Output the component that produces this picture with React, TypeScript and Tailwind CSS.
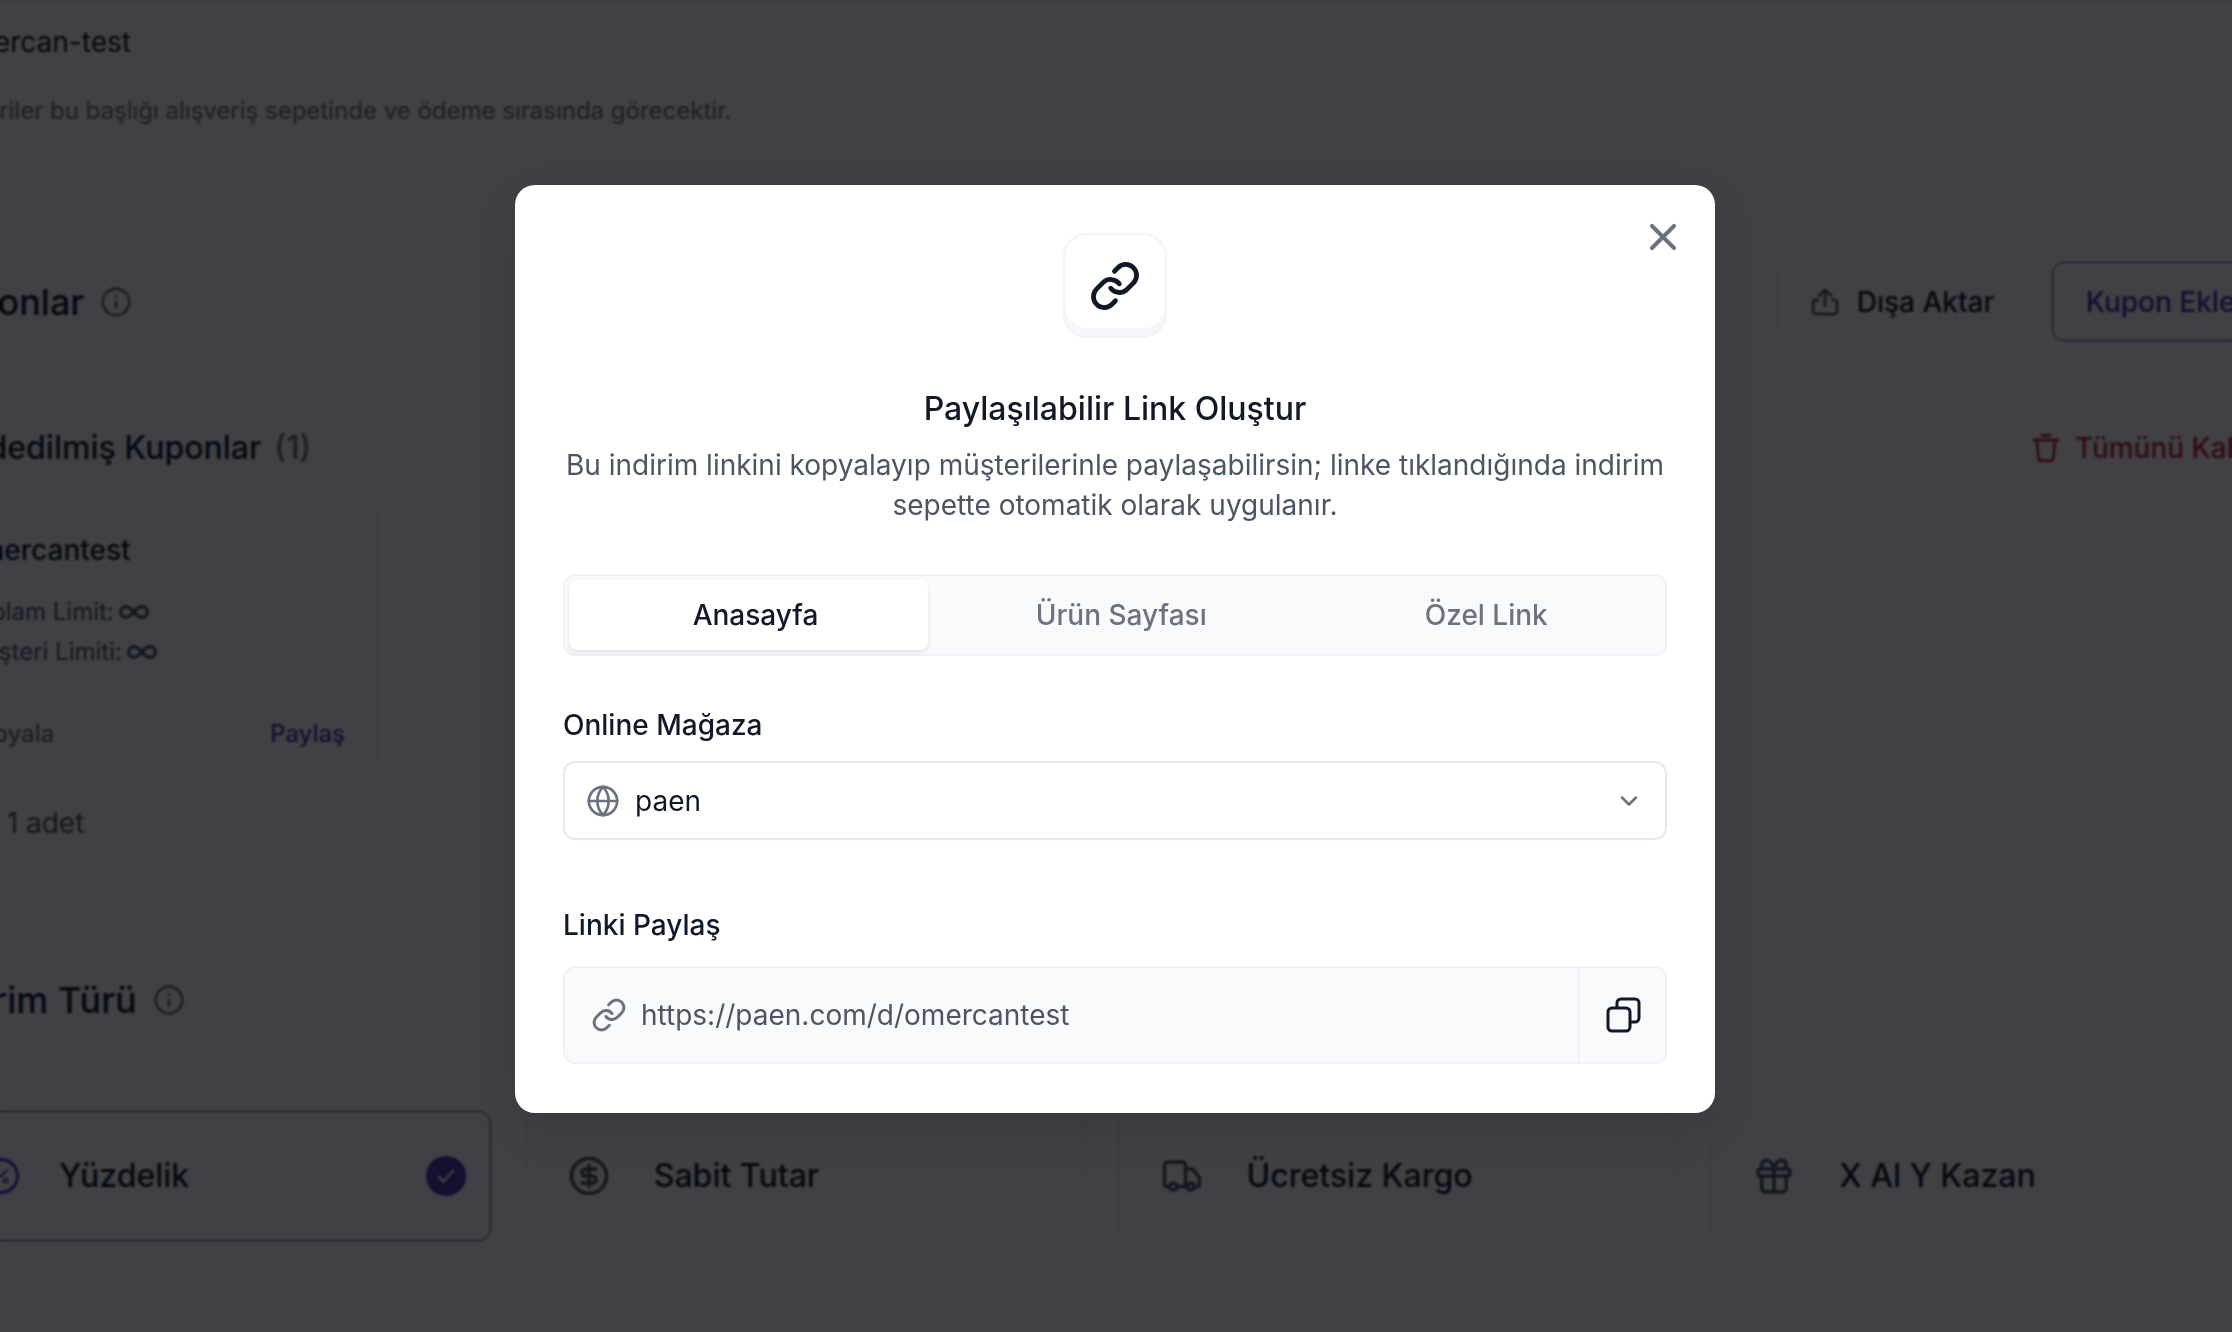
import { ChevronDown, CircleDollarSign, Gift, Globe, Info, Infinity as InfinityIcon, Link, Percent, Truck, X } from "lucide-react";

const INTER = { fontFamily: "Inter, 'Noto Sans', sans-serif" };

const discountTypes = [
  { label: "Sabit Tutar", Icon: CircleDollarSign },
  { label: "Ücretsiz Kargo", Icon: Truck },
  { label: "X Al Y Kazan", Icon: Gift },
];

function UploadIcon() {
  return (
    <svg width="32" height="32" viewBox="0 0 32 32" fill="none" stroke="#4b5563" strokeWidth="2.6" strokeLinecap="round" strokeLinejoin="round">
      <path d="M16 20V4M10 9.5 16 4l6 5.5" />
      <path d="M9 14H6.5A2.5 2.5 0 0 0 4 16.500V25a3 3 0 0 0 3 3h18a3 3 0 0 0 3-3v-8.500A2.500 2.500 0 0 0 25.500 14H23" />
    </svg>
  );
}

function TrashIcon() {
  return (
    <svg width="30" height="30" viewBox="0 0 30 30" fill="none" stroke="#c92a2a" strokeWidth="2.8" strokeLinecap="round" strokeLinejoin="round">
      <path d="M3 7h24M11 2.500h8M6 7l1.500 18a2.500 2.500 0 0 0 2.500 2.500h10a2.500 2.500 0 0 0 2.500-2.500L24 7" />
    </svg>
  );
}

function CopyIcon() {
  return (
    <svg width="36" height="36" viewBox="0 0 36 36" fill="none" stroke="#111827" strokeWidth="3">
      <rect x="3" y="11" width="22" height="23" rx="4" />
      <path d="M12 11V6a4 4 0 0 1 4-4h14a4 4 0 0 1 4 4v15a4 4 0 0 1-4 4h-5" />
    </svg>
  );
}

function Background() {
  return (
    <div className="ml-[-68px] w-[2337px] text-[#111827]">
      {/* name input */}
      <div className="h-[81px] border-y-2 border-[#eef0f2] flex items-center text-[28px] pt-[2px]">
        <span className="ml-[16px]">Ömercan-test</span>
      </div>
      <p className="mt-[14px] h-[32px] text-[24px] leading-[32px] text-[#6b7280] ml-[-3px]">Müşteriler bu başlığı alışveriş sepetinde ve ödeme sırasında görecektir.</p>

      {/* coupons header */}
      <div className="mt-[135px] flex items-center justify-between">
        <div className="flex items-center gap-[16px] ml-[-2px]">
          <h2 className="text-[36px] font-medium">Kuponlar</h2>
          <Info size={32} className="text-[#6b7280]" />
        </div>
        <div className="flex gap-[25px]">
          <button className="h-[79px] w-[251px] rounded-[12px] border-2 border-[#eef0f2] flex items-center justify-center gap-[16px] text-[28px] font-medium">
            <UploadIcon />
            Dışa Aktar
          </button>
          <button className="h-[79px] w-[217px] rounded-[12px] border-[1.5px] border-[#4338a8] text-[28px] font-medium text-[#4338a8]">Kupon Ekle</button>
        </div>
      </div>

      {/* saved coupons */}
      <div className="mt-[83px] flex items-center justify-between">
        <div className="flex items-center gap-[13px] text-[32px] font-medium ml-[-2px]">
          <h3>Kaydedilmiş Kuponlar</h3>
          <span className="text-[#6b7280]">(1)</span>
        </div>
        <div className="flex items-center gap-[14px] text-[28px] font-medium text-[#c92a2a]">
          <TrashIcon />
          Tümünü Kaldır
        </div>
      </div>

      <div className="mt-[31px] w-[446px] h-[270px] rounded-[12px] border-2 border-[#eef0f2] flex flex-col">
        <div className="flex-1 pl-[24px] pt-[27px]">
          <div className="text-[28px] font-medium leading-[36px]">Ömercantest</div>
          <div className="mt-[24px] ml-[5px] flex items-center gap-[4px] text-[24px] leading-[40px] text-[#4b5563]">Toplam Limit: <InfinityIcon size={32} strokeWidth={2.400} /></div>
          <div className="ml-[5px] flex items-center gap-[4px] text-[24px] leading-[40px] text-[#4b5563]">Müşteri Limiti: <InfinityIcon size={32} strokeWidth={2.400} /></div>
        </div>
        <div className="h-[76px] border-t-2 border-dashed border-[#eef0f2] flex items-center justify-between pl-[29px] pr-[31px] text-[24px] font-medium">
          <span className="text-[#6b7280]">Kopyala</span>
          <span className="text-[#4338a8]">Paylaş</span>
        </div>
      </div>
      <div className="mt-[31px] text-[28px] leading-[38px] text-[#4b5563] ml-[-30px]">Toplam 1 adet</div>

      {/* discount type */}
      <div className="mt-[136px] ml-[-2px] flex items-center gap-[16px]">
        <h2 className="text-[36px] font-medium leading-[44px]">İndirim Türü</h2>
        <Info size={32} className="text-[#6b7280]" />
      </div>
      <div className="mt-[89px] grid grid-cols-4 gap-[34px]">
        <div className="relative h-[130px] rounded-[12px] border-[1.5px] border-[#4338a8] flex items-center pl-[32px] gap-[22px]">
          <div className="w-[72px] h-[80px] rounded-full flex items-center justify-center">
            <div className="w-[36px] h-[36px] rounded-full border-[3px] border-[#4338a8] flex items-center justify-center">
              <Percent size={20} className="text-[#4338a8]" />
            </div>
          </div>
          <span className="text-[32px] font-medium">Yüzdelik</span>
          <div className="ml-auto mr-[24px] w-[40px] h-[40px] rounded-full bg-[#4338a8] flex items-center justify-center">
            <svg width="24" height="24" viewBox="0 0 24 24" fill="none" stroke="#fff" strokeWidth="2.6" strokeLinecap="round" strokeLinejoin="round"><path d="M5 13l4.500 4.500L19 7" /></svg>
          </div>
        </div>
        {discountTypes.map(({ label, Icon }) => (
          <div key={label} className="h-[130px] rounded-[12px] border-2 border-[#eef0f2] flex items-center pl-[24px] gap-[27px]">
            <div className="w-[76px] h-[76px] rounded-full border-2 border-[#f3f4f6] flex items-center justify-center text-[#4b5563]">
              <Icon size={42} strokeWidth={2} />
            </div>
            <span className="text-[32px] font-medium">{label}</span>
          </div>
        ))}
      </div>
    </div>
  );
}

export default function App() {
  return (
    <div className="relative h-screen overflow-hidden bg-white" style={INTER}>
      <Background />

      <div className="absolute inset-0 bg-[#04040a]/[0.76] backdrop-blur-[1px] flex justify-center items-start pt-[185px] pr-[2px]">
        <div className="relative w-[1200px] rounded-[20px] bg-white px-[48px] pt-[48px] pb-[49px] shadow-[0_16px_48px_rgba(0,0,0,0.12)]">
          <button className="absolute top-[30px] right-[30px] text-[#6b7280]">
            <X size={44} strokeWidth={2.200} />
          </button>

          <div className="mx-auto w-[104px] h-[105px] rounded-[24px] bg-white border-2 border-[#f1f3f7] shadow-[inset_0_-8px_0_#f5f7fa] flex items-center justify-center">
            <Link size={52} strokeWidth={2.200} className="text-[#111827]" />
          </div>

          <h2 className="mt-[51px] text-center text-[32px] leading-[40px] font-medium text-[#111827]">Paylaşılabilir Link Oluştur</h2>
          <p className="mt-[16px] text-center text-[28px] leading-[40px] text-[#4b5563]">
            Bu indirim linkini kopyalayıp müşterilerinle paylaşabilirsin; linke tıklandığında indirim
            <br />
            sepette otomatik olarak uygulanır.
          </p>

          <div className="mt-[49px] h-[82px] rounded-[12px] bg-[#f9fafc] border-2 border-[#f1f2f7] p-[4px] grid grid-cols-[359px_1fr_1fr] text-[28px] font-medium">
            <div className="rounded-[8px] bg-white shadow-[0_2px_4px_rgba(0,0,0,0.1)] flex items-center justify-center pl-[14px] text-[#111827]">Anasayfa</div>
            <div className="flex items-center justify-center text-[#6b7280] ml-[20px]">Ürün Sayfası</div>
            <div className="flex items-center justify-center text-[#6b7280] ml-[17px]">Özel Link</div>
          </div>

          <label className="block mt-[49px] text-[28px] leading-[40px] font-medium text-[#111827]">Online Mağaza</label>
          <div className="mt-[16px] h-[79px] rounded-[12px] border-2 border-[#e5e8ef] flex items-center pl-[21px] pr-[22px]">
            <Globe size={34} strokeWidth={1.900} className="text-[#6b7280]" />
            <span className="ml-[15px] text-[28px] text-[#111827]">paen</span>
            <ChevronDown size={28} strokeWidth={2.200} className="ml-auto text-[#6b7280]" />
          </div>

          <label className="block mt-[65px] text-[28px] leading-[40px] font-medium text-[#111827]">Linki Paylaş</label>
          <div className="mt-[21px] h-[98px] rounded-[12px] bg-[#f9fafc] border-2 border-[#f1f2f7] flex items-center">
            <Link size={36} strokeWidth={2} className="ml-[26px] text-[#6b7280]" />
            <span className="ml-[14px] text-[28px] text-[#4b5563]">https://paen.com/d/omercantest</span>
            <div className="ml-auto w-[87px] h-full border-l-2 border-[#f1f2f7] flex items-center justify-center">
              <CopyIcon />
            </div>
          </div>
        </div>
      </div>
    </div>
  );
}
